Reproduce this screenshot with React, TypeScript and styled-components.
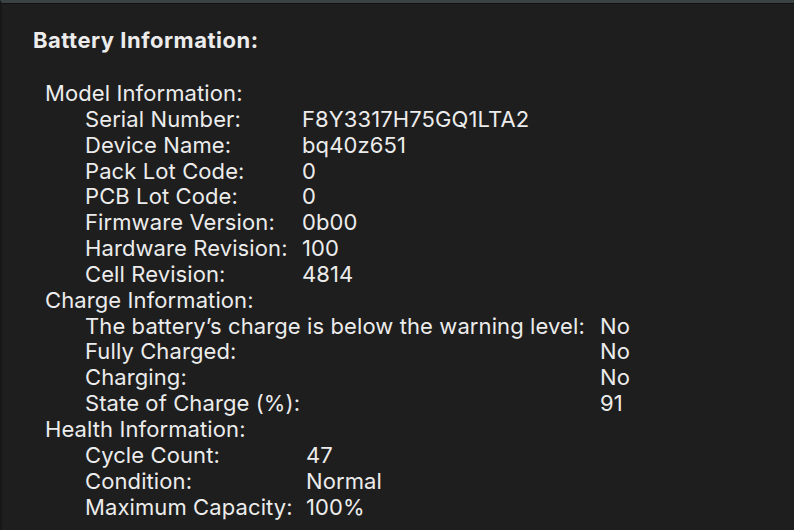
import React from "react";
import styled, { createGlobalStyle } from "styled-components";

const GlobalStyle = createGlobalStyle`
    html, body {
        margin: 0;
        padding: 0;
        background: #1e1e1e;
    }
`;

const Window = styled.div`
    width: 794px;
    height: 530px;
    box-sizing: border-box;
    background: #1e1e1e;
    border-top: 3px solid #3b4244;
    border-left: 2px solid #171717;
    overflow: hidden;
    font-family: Inter, "Liberation Sans", sans-serif;
    color: #ececec;
    font-size: 22px;
    line-height: 25.85px;
    letter-spacing: 0.1px;
`;

const TopRule = styled.div`
    height: 1px;
    background: #111111;
`;

const Content = styled.div`
    padding: 23px 0 0 31px;
`;

const Title = styled.h1`
    margin: 0 0 28px;
    font-size: 22px;
    line-height: 26px;
    font-weight: 700;
    letter-spacing: 0.5px;
`;

const Section = styled.div`
    padding-left: 12px;
`;

const SectionHeading = styled.div`
    font-weight: 400;
`;

const Rows = styled.div<{ $labelWidth: number }>`
    display: grid;
    grid-template-columns: ${(p) => p.$labelWidth}px 1fr;
    padding-left: 40px;
`;

const Label = styled.div`
    white-space: nowrap;
`;

const Value = styled.div`
    white-space: nowrap;
`;

interface Group {
    heading: string;
    labelWidth: number;
    rows: [string, string][];
}

const groups: Group[] = [
    {
        heading: "Model Information:",
        labelWidth: 217,
        rows: [
            ["Serial Number:", "F8Y3317H75GQ1LTA2"],
            ["Device Name:", "bq40z651"],
            ["Pack Lot Code:", "0"],
            ["PCB Lot Code:", "0"],
            ["Firmware Version:", "0b00"],
            ["Hardware Revision:", "100"],
            ["Cell Revision:", "4814"],
        ],
    },
    {
        heading: "Charge Information:",
        labelWidth: 515,
        rows: [
            ["The battery\u2019s charge is below the warning level:", "No"],
            ["Fully Charged:", "No"],
            ["Charging:", "No"],
            ["State of Charge (%):", "91"],
        ],
    },
    {
        heading: "Health Information:",
        labelWidth: 221,
        rows: [
            ["Cycle Count:", "47"],
            ["Condition:", "Normal"],
            ["Maximum Capacity:", "100%"],
        ],
    },
];

const App = () => {
    return <>
        <GlobalStyle />
        <Window>
            <TopRule />
            <Content>
                <Title>Battery Information:</Title>
                {groups.map((g) => (
                    <Section key={g.heading}>
                        <SectionHeading>{g.heading}</SectionHeading>
                        <Rows $labelWidth={g.labelWidth}>
                            {g.rows.map(([label, value]) => (
                                <React.Fragment key={label}>
                                    <Label>{label}</Label>
                                    <Value>{value}</Value>
                                </React.Fragment>
                            ))}
                        </Rows>
                    </Section>
                ))}
            </Content>
        </Window>
    </>
}

export default App;
